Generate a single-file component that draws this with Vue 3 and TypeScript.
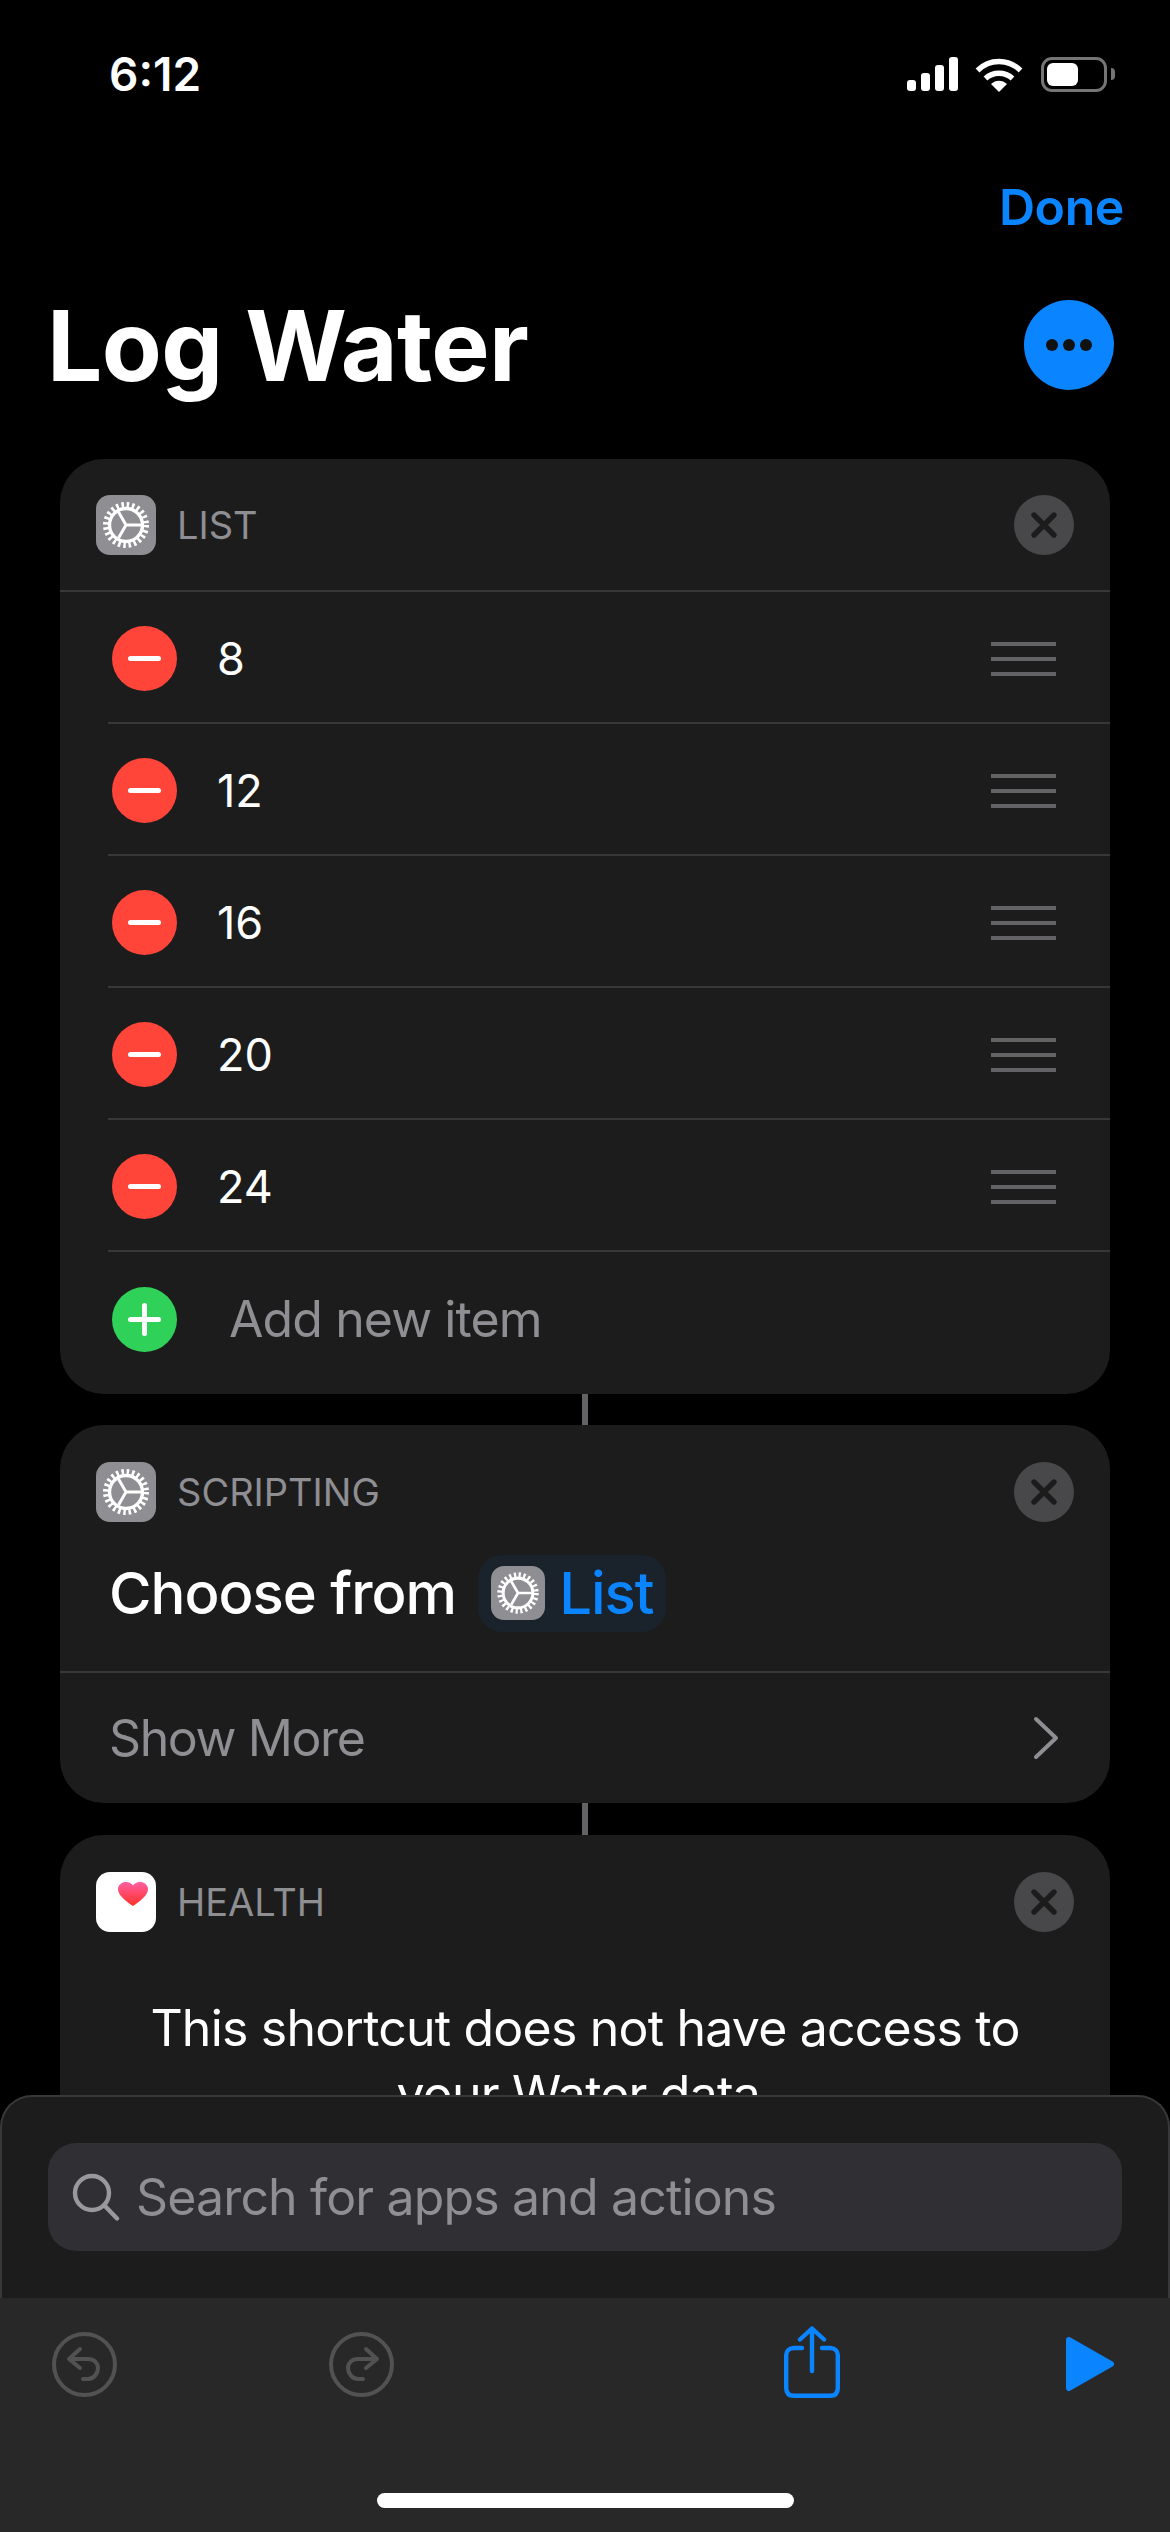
<script setup lang="ts">
const items: string[] = ['8', '12', '16', '20', '24']
</script>

<template>
  <div class="screen">
    <svg class="defs" width="0" height="0">
      <symbol id="gear" viewBox="0 0 60 60">
        <circle cx="30" cy="30" r="16.5" fill="none" stroke="#fff" stroke-width="3.4" />
        <circle cx="30" cy="30" r="20" fill="none" stroke="#fff" stroke-width="6" stroke-dasharray="2.5 2.74" />
        <path d="M30 30 L22.5 17 M30 30 H46 M30 30 L22.5 43" fill="none" stroke="#fff" stroke-width="3" />
      </symbol>
    </svg>

    <div class="status">
      <span class="time">6:12</span>
      <div class="status-icons">
        <svg width="51" height="34" viewBox="0 0 51 34" fill="#fff">
          <rect x="0" y="23" width="9" height="11" rx="3" />
          <rect x="14" y="16" width="9" height="18" rx="3" />
          <rect x="28" y="8" width="9" height="26" rx="3" />
          <rect x="42" y="0" width="9" height="34" rx="3" />
        </svg>
        <svg width="48" height="35" viewBox="0 0 48 35" fill="none" stroke="#fff" stroke-width="5.4">
          <path d="M2.5 13.5 C14.5 1.5 33.5 1.5 45.5 13.5" />
          <path d="M10.5 21.5 C18 14.5 30 14.5 37.5 21.5" />
          <path d="M24 35 L16 27 C20.5 22.5 27.5 22.5 32 27 Z" fill="#fff" stroke="none" />
        </svg>
        <div class="battery"><div class="battery-fill"></div></div>
        <div class="battery-nub"></div>
      </div>
    </div>

    <div class="done-row"><span class="done">Done</span></div>

    <div class="title-row">
      <h1 class="title">Log Water</h1>
      <div class="more"><i></i><i></i><i></i></div>
    </div>

    <div class="flow">
      <section class="card">
        <header class="card-head">
          <svg class="app-icon gear" viewBox="0 0 60 60"><use href="#gear" /></svg>
          <span class="card-label">LIST</span>
          <span class="close">
            <svg width="30" height="30" viewBox="0 0 30 30"><path d="M5 5 L25 25 M25 5 L5 25" stroke="#1c1c1c" stroke-width="5.400" stroke-linecap="round" /></svg>
          </span>
        </header>
        <div class="rows">
          <div v-for="item in items" :key="item" class="row">
            <span class="round red"><b class="minus"></b></span>
            <span class="row-text">{{ item }}</span>
            <span class="drag"><i></i><i></i><i></i></span>
          </div>
          <div class="row add">
            <span class="round green"><b class="minus"></b><b class="minus vert"></b></span>
            <span class="add-text">Add new item</span>
          </div>
        </div>
      </section>

      <div class="connector"></div>

      <section class="card">
        <header class="card-head short">
          <svg class="app-icon gear" viewBox="0 0 60 60"><use href="#gear" /></svg>
          <span class="card-label">SCRIPTING</span>
          <span class="close">
            <svg width="30" height="30" viewBox="0 0 30 30"><path d="M5 5 L25 25 M25 5 L5 25" stroke="#1c1c1c" stroke-width="5.400" stroke-linecap="round" /></svg>
          </span>
        </header>
        <div class="choose">
          <span>Choose from</span>
          <span class="pill">
            <svg class="pill-icon" viewBox="0 0 60 60"><use href="#gear" /></svg>
            <span class="pill-text">List</span>
          </span>
        </div>
        <div class="show-more">
          <span>Show More</span>
          <svg width="28" height="44" viewBox="0 0 28 44" fill="none"><path d="M4 3 L24 22 L4 41" stroke="#8e8e93" stroke-width="4" stroke-linecap="round" stroke-linejoin="round" /></svg>
        </div>
      </section>

      <div class="connector tall"></div>

      <section class="card last">
        <header class="card-head short">
          <span class="app-icon health">
            <svg width="30" height="25" viewBox="0 0 30 28" preserveAspectRatio="none">
              <defs>
                <linearGradient id="heart" x1="0" y1="0" x2="0" y2="1">
                  <stop offset="0" stop-color="#ff5fa2" />
                  <stop offset="1" stop-color="#ff3127" />
                </linearGradient>
              </defs>
              <path d="M15 27 C8 21 0 15 0 8 C0 3 4 0 8 0 C11 0 13.500 1.500 15 4 C16.500 1.500 19 0 22 0 C26 0 30 3 30 8 C30 15 22 21 15 27 Z" fill="url(#heart)" />
            </svg>
          </span>
          <span class="card-label">HEALTH</span>
          <span class="close">
            <svg width="30" height="30" viewBox="0 0 30 30"><path d="M5 5 L25 25 M25 5 L5 25" stroke="#1c1c1c" stroke-width="5.400" stroke-linecap="round" /></svg>
          </span>
        </header>
        <p class="notice">This shortcut does not have access to your Water data.</p>
      </section>
    </div>

    <div class="sheet">
      <div class="search-wrap">
        <div class="search">
          <svg width="48" height="48" viewBox="0 0 48 48" fill="none" stroke="#98989d" stroke-width="4.400" stroke-linecap="round">
            <circle cx="20" cy="20" r="17" />
            <path d="M32.500 32.500 L45 45.500" />
          </svg>
          <span>Search for apps and actions</span>
        </div>
      </div>
      <div class="toolbar">
        <div class="tools">
          <svg class="tool" width="65" height="65" viewBox="0 0 65 65" fill="none" stroke="#525252" stroke-width="4" stroke-linecap="round" stroke-linejoin="round">
            <circle cx="32.500" cy="32.500" r="30.500" />
            <path d="M28 17 L17 27 L28 36 M18 27 H36 C42 27 46 31 46 36 C46 41 42 47 36 47 H31" />
          </svg>
          <svg class="tool redo" width="65" height="65" viewBox="0 0 65 65" fill="none" stroke="#525252" stroke-width="4" stroke-linecap="round" stroke-linejoin="round">
            <circle cx="32.500" cy="32.500" r="30.500" />
            <path d="M37 17 L48 27 L37 36 M47 27 H29 C23 27 19 31 19 36 C19 41 23 47 29 47 H34" />
          </svg>
          <svg class="share" width="56" height="72" viewBox="0 0 56 72" fill="none" stroke="#0a84ff" stroke-width="4.400" stroke-linecap="round" stroke-linejoin="round">
            <path d="M18 22 H10 C5 22 2.200 25 2.200 29 V62 C2.200 67 5 69.800 10 69.800 H46 C51 69.800 53.800 67 53.800 62 V29 C53.800 25 51 22 46 22 H38" />
            <path d="M28 2.500 V45 M16 13.500 L28 2.500 L40 13.500" />
          </svg>
          <svg class="play" width="48" height="54" viewBox="0 0 48 54">
            <path d="M3 3 L45 27 L3 51 Z" fill="#0a84ff" stroke="#0a84ff" stroke-width="6" stroke-linejoin="round" />
          </svg>
        </div>
        <div class="home"></div>
      </div>
    </div>
  </div>
</template>

<style scoped>
.screen {
  position: relative;
  width: 1170px;
  height: 2532px;
  overflow: hidden;
  background: #000;
  color: #fff;
  font-family: Inter, "Noto Sans", sans-serif;
}

.defs {
  position: absolute;
}

.status {
  height: 148px;
  display: flex;
  align-items: center;
  justify-content: space-between;
  padding: 0 55px 0 109px;
  box-sizing: border-box;
}

.time {
  font-size: 46px;
  font-weight: 600;
}

.status-icons {
  display: flex;
  align-items: center;
}

.status-icons svg:nth-child(2) {
  margin-left: 17px;
}

.battery {
  width: 66px;
  height: 35px;
  margin-left: 18px;
  box-sizing: border-box;
  border: 3px solid #757575;
  border-radius: 11px;
  padding: 3px;
}

.battery-fill {
  width: 31px;
  height: 100%;
  background: #fff;
  border-radius: 6px;
}

.battery-nub {
  width: 4px;
  height: 12px;
  margin-left: 4px;
  background: #757575;
  border-radius: 0 6px 6px 0;
}

.done-row {
  height: 118px;
  display: flex;
  align-items: center;
  justify-content: flex-end;
  padding-right: 46px;
}

.done {
  font-size: 50px;
  font-weight: 600;
  letter-spacing: -0.4px;
  color: #0a84ff;
}

.title-row {
  height: 158px;
  display: flex;
  align-items: center;
  justify-content: space-between;
  padding: 0 56px 0 47px;
}

.title {
  margin: 0;
  font-size: 98px;
  font-weight: 700;
  letter-spacing: -0.6px;
}

.more {
  width: 90px;
  height: 90px;
  border-radius: 50%;
  background: #0a84ff;
  display: flex;
  align-items: center;
  justify-content: center;
  gap: 5px;
}

.more i {
  width: 12px;
  height: 12px;
  border-radius: 50%;
  background: #111;
}

.flow {
  margin-top: 35px;
  display: flex;
  flex-direction: column;
  align-items: center;
}

.card {
  width: 1050px;
  background: #1c1c1c;
  border-radius: 44px;
  overflow: hidden;
  flex-shrink: 0;
}

.card.last {
  height: 400px;
}

.connector {
  width: 6px;
  height: 31px;
  background: #636366;
  flex-shrink: 0;
}

.connector.tall {
  height: 32px;
}

.card-head {
  height: 133px;
  display: flex;
  align-items: center;
  padding: 0 36px;
  border-bottom: 2px solid #38383a;
  box-sizing: border-box;
}

.card-head.short {
  height: 134px;
  border-bottom: none;
}

.app-icon {
  width: 60px;
  height: 60px;
  border-radius: 14px;
  flex-shrink: 0;
}

.gear {
  background: #8e8e93;
}

.health {
  background: #fff;
  display: flex;
  padding: 10px 0 0 22px;
  box-sizing: border-box;
}

.card-label {
  margin-left: 21px;
  font-size: 38px;
  color: #8e8e93;
  flex: 1;
}

.close {
  width: 60px;
  height: 60px;
  border-radius: 50%;
  background: #48484a;
  display: flex;
  align-items: center;
  justify-content: center;
}

.row {
  height: 132px;
  margin-left: 48px;
  display: flex;
  align-items: center;
  border-bottom: 2px solid #38383a;
  box-sizing: border-box;
  padding: 3px 0 0 4px;
}

.row.add {
  border-bottom: none;
  height: 142px;
  padding: 0 0 8px 4px;
}

.round {
  position: relative;
  width: 65px;
  height: 65px;
  border-radius: 50%;
  display: block;
  flex-shrink: 0;
}

.red {
  background: #ff453a;
}

.green {
  background: #30d158;
}

.minus {
  position: absolute;
  left: 16px;
  top: 30px;
  width: 33px;
  height: 5px;
  border-radius: 3px;
  background: #fff;
}

.minus.vert {
  transform: rotate(90deg);
}

.row-text {
  margin-left: 40px;
  font-size: 45px;
  flex: 1;
}

.add-text {
  margin-left: 52px;
  font-size: 50px;
  letter-spacing: -0.9px;
  color: #8e8e93;
}

.drag {
  display: flex;
  flex-direction: column;
  gap: 11px;
  width: 65px;
  margin-right: 54px;
}

.drag i {
  display: block;
  height: 4px;
  background: #636366;
}

.choose {
  display: flex;
  align-items: center;
  height: 88px;
  margin-top: -10px;
  padding-left: 49px;
  font-size: 58px;
  font-weight: 500;
  letter-spacing: -1px;
}

.pill {
  display: flex;
  align-items: center;
  height: 77px;
  margin-left: 22px;
  padding: 0 12px 0 13px;
  border-radius: 24px;
  background: #1a222c;
}

.pill-icon {
  width: 54px;
  height: 54px;
  border-radius: 13px;
  background: #8e8e93;
}

.pill-text {
  margin-left: 14px;
  color: #0a84ff;
}

.show-more {
  height: 132px;
  margin-top: 34px;
  display: flex;
  align-items: center;
  justify-content: space-between;
  padding: 0 50px 0 49px;
  border-top: 2px solid #38383a;
  box-sizing: border-box;
  font-size: 50px;
  letter-spacing: -1.4px;
  color: #8e8e93;
}

.notice {
  margin: 26px 60px 0;
  font-size: 50px;
  line-height: 66px;
  letter-spacing: -0.8px;
  text-align: center;
}

.sheet {
  position: absolute;
  left: 0;
  right: 0;
  top: 2095px;
  bottom: 0;
  display: flex;
  flex-direction: column;
}

.search-wrap {
  height: 203px;
  box-sizing: border-box;
  padding: 46px 46px 0;
  background: #1c1c1c;
  border: 2px solid #38383a;
  border-bottom: none;
  border-radius: 32px 32px 0 0;
}

.search {
  height: 108px;
  display: flex;
  align-items: center;
  gap: 16px;
  padding-left: 24px;
  background: #2f2f34;
  border-radius: 28px;
  font-size: 50px;
  letter-spacing: -0.85px;
  color: #8e8e93;
}

.toolbar {
  flex: 1;
  background: #282828;
  display: flex;
  flex-direction: column;
  align-items: center;
}

.tools {
  width: 100%;
  height: 72px;
  margin-top: 28px;
  display: flex;
  align-items: flex-end;
  box-sizing: border-box;
  padding-left: 52px;
}

.tool {
  margin-bottom: 1px;
}

.redo {
  margin-left: 212px;
}

.share {
  margin-left: 390px;
}

.play {
  margin-left: 226px;
  margin-bottom: 7px;
}

.home {
  width: 417px;
  height: 15px;
  margin-top: 95px;
  border-radius: 8px;
  background: #fff;
}
</style>

<style>
body {
  background: #000;
}
</style>
